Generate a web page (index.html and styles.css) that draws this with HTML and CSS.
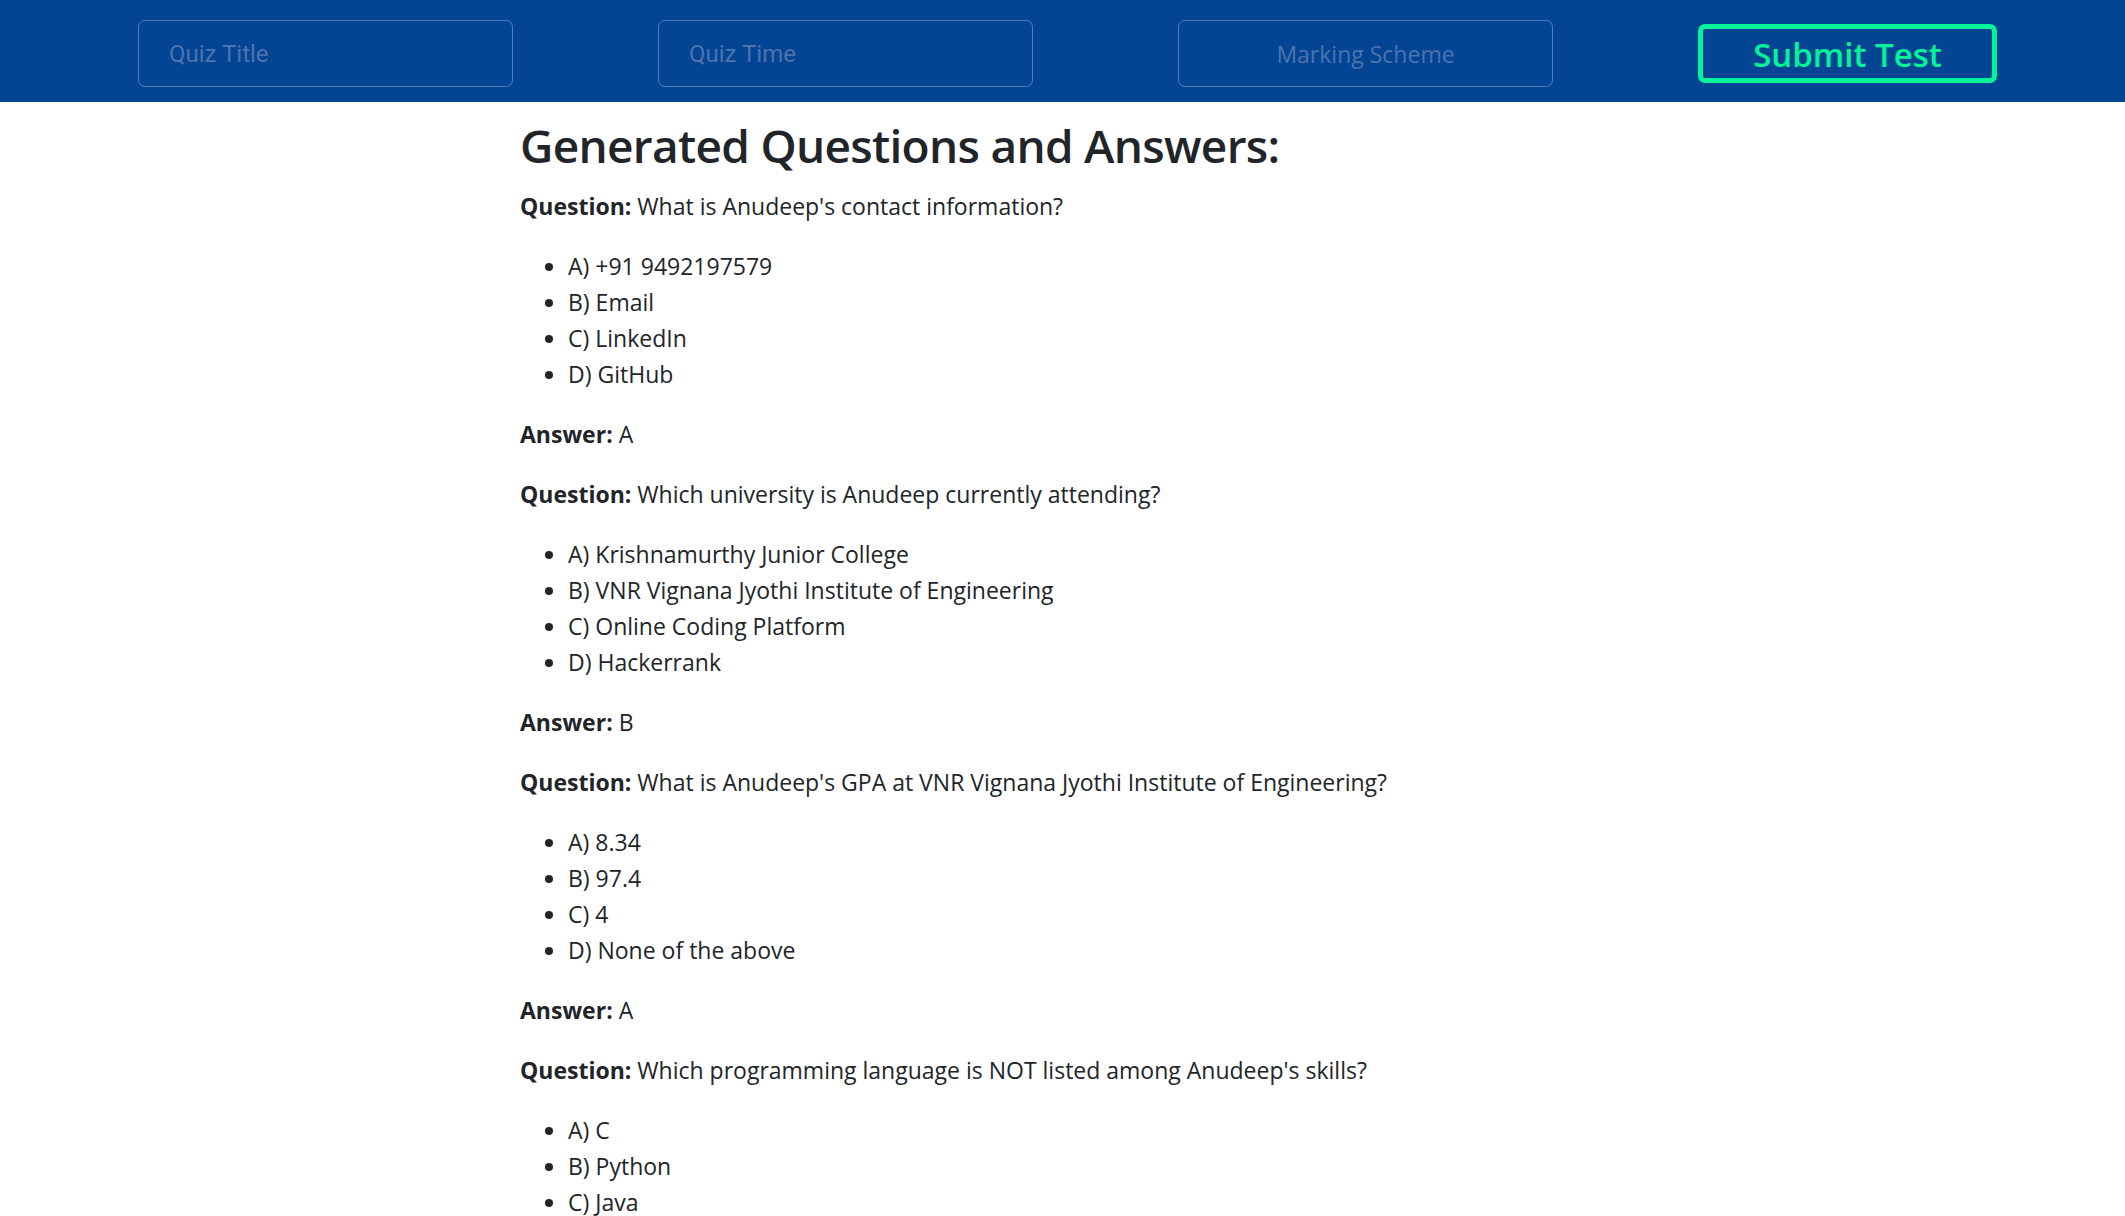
FILE: index.html
```html
<!DOCTYPE html>
<html lang="en">
<head>
<meta charset="utf-8">
<title>Quiz</title>
<link rel="stylesheet" href="styles.css">
</head>
<body>
<header class="topbar">
  <input class="field" type="text" placeholder="Quiz Title">
  <input class="field" type="text" placeholder="Quiz Time">
  <input class="field field-center" type="text" placeholder="Marking Scheme">
  <button class="submit" type="button">Submit Test</button>
</header>
<main class="content">
  <h2 class="heading">Generated Questions and Answers:</h2>

  <p class="line"><strong>Question:</strong> What is Anudeep's contact information?</p>
  <ul class="options">
    <li>A) +91 9492197579</li>
    <li>B) Email</li>
    <li>C) LinkedIn</li>
    <li>D) GitHub</li>
  </ul>
  <p class="line"><strong>Answer:</strong> A</p>

  <p class="line"><strong>Question:</strong> Which university is Anudeep currently attending?</p>
  <ul class="options">
    <li>A) Krishnamurthy Junior College</li>
    <li>B) VNR Vignana Jyothi Institute of Engineering</li>
    <li>C) Online Coding Platform</li>
    <li>D) Hackerrank</li>
  </ul>
  <p class="line"><strong>Answer:</strong> B</p>

  <p class="line"><strong>Question:</strong> What is Anudeep's GPA at VNR Vignana Jyothi Institute of Engineering?</p>
  <ul class="options">
    <li>A) 8.34</li>
    <li>B) 97.4</li>
    <li>C) 4</li>
    <li>D) None of the above</li>
  </ul>
  <p class="line"><strong>Answer:</strong> A</p>

  <p class="line"><strong>Question:</strong> Which programming language is NOT listed among Anudeep's skills?</p>
  <ul class="options">
    <li>A) C</li>
    <li>B) Python</li>
    <li>C) Java</li>
  </ul>
</main>
</body>
</html>
```
FILE: styles.css
```css
html, body {
  margin: 0;
  padding: 0;
}
body {
  font-family: "Open Sans", "Noto Sans", sans-serif;
  font-size: 23px;
  line-height: 36px;
  color: #212529;
  background: #ffffff;
}
.topbar {
  height: 102px;
  background: #034593;
  display: flex;
  align-items: flex-start;
  gap: 145px;
  padding-left: 138px;
  box-sizing: border-box;
}
.field {
  width: 375px;
  height: 67px;
  margin-top: 20px;
  box-sizing: border-box;
  background: transparent;
  border: 1px solid rgba(140, 170, 220, 0.55);
  border-radius: 7px;
  padding: 0 30px;
  font-family: Roboto, sans-serif;
  font-size: 24px;
  color: #ffffff;
  outline: none;
}
.field::placeholder {
  color: #4c72b0;
}
.field-center {
  text-align: center;
  font-family: "Open Sans", sans-serif;
  font-size: 23px;
}
.submit {
  width: 299px;
  height: 59px;
  margin-top: 24px;
  box-sizing: border-box;
  background: transparent;
  border: 5px solid #00f59a;
  border-radius: 7px;
  color: #00f59a;
  font-family: "Open Sans", sans-serif;
  font-weight: 600;
  font-size: 33px;
  line-height: 1;
  padding: 2px 0 0;
}
.content {
  padding-left: 520px;
  padding-top: 13px;
}
.heading {
  margin: 0 0 12px;
  font-size: 46px;
  line-height: 61px;
  font-weight: 600;
  letter-spacing: -0.7px;
}
.line {
  margin: 0 0 24px;
}
.line strong {
  font-weight: 700;
}
.options {
  margin: 0 0 24px;
  padding-left: 48px;
}
```
